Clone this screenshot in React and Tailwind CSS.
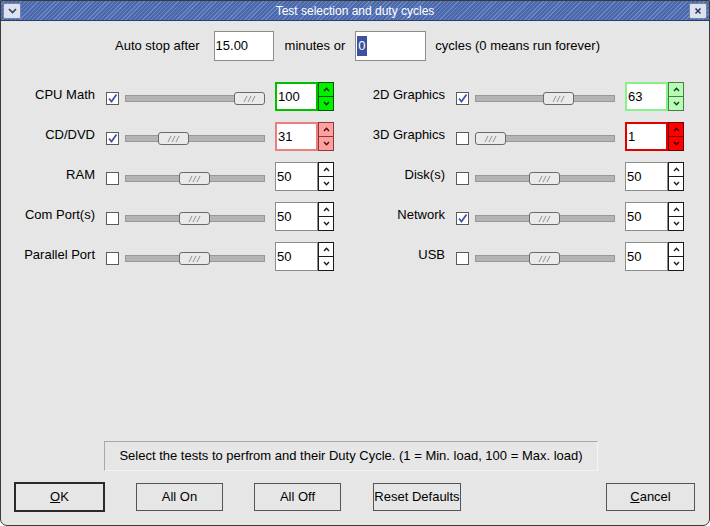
import React from 'react';

const FONT = { fontFamily: '"Liberation Sans", Arial, sans-serif' };

// colour sets for the spin boxes
const SPIN = {
  plain: { box: 'border border-[#8c8c8c]', btn: 'bg-white border-[#1a1a1a]', arrow: '#1a1a1a' },
  green: { box: 'border-2 border-[#00c000]', btn: 'bg-[#00f000] border-[#005800]', arrow: '#003000' },
  lightgreen: { box: 'border-2 border-[#88f088]', btn: 'bg-[#b4ffb4] border-[#507850]', arrow: '#203020' },
  pink: { box: 'border-2 border-[#e88080]', btn: 'bg-[#ffa0a0] border-[#903838]', arrow: '#401010' },
  red: { box: 'border-2 border-[#e00000]', btn: 'bg-[#ff0000] border-[#700000]', arrow: '#300000' },
};

const LEFT = [
  { label: 'CPU Math', checked: true, value: 100, spin: 'green' },
  { label: 'CD/DVD', checked: true, value: 31, spin: 'pink' },
  { label: 'RAM', checked: false, value: 50, spin: 'plain' },
  { label: 'Com Port(s)', checked: false, value: 50, spin: 'plain' },
  { label: 'Parallel Port', checked: false, value: 50, spin: 'plain' },
];

const RIGHT = [
  { label: '2D Graphics', checked: true, value: 63, spin: 'lightgreen' },
  { label: '3D Graphics', checked: false, value: 1, spin: 'red' },
  { label: 'Disk(s)', checked: false, value: 50, spin: 'plain' },
  { label: 'Network', checked: true, value: 50, spin: 'plain' },
  { label: 'USB', checked: false, value: 50, spin: 'plain' },
];

function Check({ checked }) {
  return (
    <div className="w-[13px] h-[13px] mt-[10px] border border-[#5a5a5a] bg-white flex items-center justify-center shrink-0">
      {checked && (
        <svg width="11" height="11" viewBox="0 0 11 11">
          <path d="M2 5.5 L4.5 8.5 L9.5 1.5" fill="none" stroke="#4452a8" strokeWidth="1.8" />
        </svg>
      )}
    </div>
  );
}

function Slider({ value }) {
  const left = Math.round(((value - 1) / 99) * 109);
  return (
    <div className="relative w-[140px] h-[13px] mt-[10px] shrink-0">
      <div className="absolute left-0 right-0 top-[3px] h-[7px] bg-[#b4b4b4] border border-[#989898]" />
      <div
        className="absolute top-0 w-[31px] h-[13px] rounded-[3px] border border-[#6a6a6a] bg-[#eaeaea] flex items-center justify-center"
        style={{ left }}
      >
        <svg width="14" height="6" viewBox="0 0 14 6">
          <path d="M1 6 L4 0 M5 6 L8 0 M9 6 L12 0" stroke="#7a7a7a" strokeWidth="0.8" fill="none" />
        </svg>
      </div>
    </div>
  );
}

function Spin({ value, kind }) {
  const s = SPIN[kind];
  return (
    <div className="flex ml-[10px] shrink-0">
      <div className={`w-[43px] h-[29px] bg-white ${s.box} flex items-center pl-[1px] text-[13px] text-black`}>
        {value}
      </div>
      <div className="flex flex-col w-[16px]">
        <div className={`h-[15px] border ${s.btn} flex items-center justify-center`}>
          <svg width="7" height="5" viewBox="0 0 7 5">
            <path d="M1 4 L3.5 1.2 L6 4" fill="none" stroke={s.arrow} strokeWidth="1.3" />
          </svg>
        </div>
        <div className={`h-[14px] border border-t-0 ${s.btn} flex items-center justify-center`}>
          <svg width="7" height="5" viewBox="0 0 7 5">
            <path d="M1 1 L3.5 3.8 L6 1" fill="none" stroke={s.arrow} strokeWidth="1.3" />
          </svg>
        </div>
      </div>
    </div>
  );
}

function TestRow({ row }) {
  return (
    <div className="flex items-start h-[29px]">
      <div className="w-[94px] text-right text-[13px] text-black mt-[3px] whitespace-nowrap">{row.label}</div>
      <div className="w-[11px]" />
      <Check checked={row.checked} />
      <div className="w-[6px]" />
      <Slider value={row.value} />
      <Spin value={row.value} kind={row.spin} />
    </div>
  );
}

function Button({ children, focused, className = '' }) {
  return (
    <button
      className={`h-[28px] bg-[#e6e6e6] text-[13px] text-black flex items-center justify-center ${
        focused ? 'border-2 border-[#2a2a2a]' : 'border border-[#555]'
      } ${className}`}
    >
      {children}
    </button>
  );
}

export default function App() {
  return (
    <div style={FONT} className="w-[710px] h-[526px] bg-[#e6e6e6] flex flex-col border border-[#3a3a3a] rounded-b-[7px] overflow-hidden">
      {/* Title bar */}
      <div className="h-[20px] shrink-0 flex items-center justify-between px-[2px] border-b border-[#2c3c68] bg-[repeating-linear-gradient(135deg,#4b68aa_0px,#4b68aa_2px,#6a87c5_2px,#6a87c5_3px)]">
        <div className="w-[18px] h-[16px] rounded-[2px] bg-[#dde2ec] border border-[#7284a8] flex items-center justify-center">
          <svg width="9" height="6" viewBox="0 0 9 6">
            <path d="M1 1 L4.5 4.5 L8 1" fill="none" stroke="#2b3d6e" strokeWidth="1.6" />
          </svg>
        </div>
        <div className="text-white text-[12px] leading-none">Test selection and duty cycles</div>
        <div className="w-[18px] h-[16px] rounded-[2px] bg-[#dde2ec] border border-[#7284a8] flex items-center justify-center">
          <svg width="8" height="8" viewBox="0 0 8 8">
            <path d="M1.5 1.5 L6.5 6.5 M6.5 1.5 L1.5 6.5" fill="none" stroke="#2b3d6e" strokeWidth="1.6" />
          </svg>
        </div>
      </div>

      {/* Auto stop row */}
      <div className="flex items-center mt-[10px] pl-[114px] h-[30px] text-[13px] text-black">
        <span>Auto stop after</span>
        <div className="ml-[14px] w-[60px] h-[30px] bg-white border border-[#8c8c8c] flex items-center pl-[1px]">15.00</div>
        <span className="ml-[11px]">minutes or</span>
        <div className="ml-[10px] w-[71px] h-[30px] bg-white border border-[#8c8c8c] flex items-center pl-[1px]">
          <span className="bg-[#3c52a0] text-white px-[1px]">0</span>
        </div>
        <span className="ml-[9px]">cycles (0 means run forever)</span>
      </div>

      {/* Test grid */}
      <div className="grid grid-cols-2 mt-[21px] w-[700px]">
        <div className="flex flex-col gap-[11px] w-[350px]">
          {LEFT.map((r) => (
            <TestRow key={r.label} row={r} />
          ))}
        </div>
        <div className="flex flex-col gap-[11px] w-[350px]">
          {RIGHT.map((r) => (
            <TestRow key={r.label} row={r} />
          ))}
        </div>
      </div>

      <div className="flex-1" />

      {/* Hint */}
      <div className="ml-[103px] w-[494px] h-[30px] border border-[#a8a8a8] border-r-[#f4f4f4] border-b-[#f4f4f4] flex items-center justify-center text-[13px] text-black">
        Select the tests to perfrom and their Duty Cycle. (1 = Min. load, 100 = Max. load)
      </div>

      {/* Buttons */}
      <div className="flex items-center mt-[11px] mb-[13px] pl-[13px] pr-[14px]">
        <Button focused className="w-[91px] h-[30px]">
          <span><span className="underline">O</span>K</span>
        </Button>
        <Button className="w-[87px] ml-[31px]">All On</Button>
        <Button className="w-[87px] ml-[31px]">All Off</Button>
        <Button className="w-[88px] ml-[32px]">Reset Defaults</Button>
        <div className="flex-1" />
        <Button className="w-[89px]">
          <span><span className="underline">C</span>ancel</span>
        </Button>
      </div>
    </div>
  );
}
